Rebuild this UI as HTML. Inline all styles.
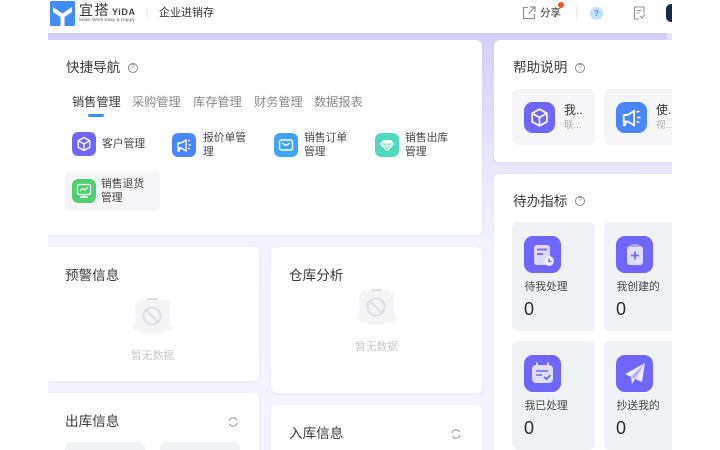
<!DOCTYPE html>
<html lang="zh">
<head>
<meta charset="utf-8">
<style>
*{box-sizing:border-box;margin:0;padding:0}
html,body{width:720px;height:450px;overflow:hidden;background:#fff}
body{font-family:"Liberation Sans","Noto Sans CJK SC",sans-serif;position:relative;color:#333}
#v{position:absolute;left:48px;top:0;width:624px;height:450px;overflow:hidden;background:linear-gradient(180deg,#d2cefc 33px,#e4e1fd 130px,#f3f2fe 240px,#f4f3fe 100%)}
#h{position:absolute;left:0;top:0;width:624px;height:33px;background:#fff}
.a{position:absolute}
.c{position:absolute;background:#fff;border-radius:6px;box-shadow:0 1px 3px rgba(90,80,180,.07)}
.t{position:absolute;font-size:13.6px;line-height:20px;color:#3a3a40;white-space:nowrap}
.q{position:absolute;width:10px;height:10px;border:1px solid #8a8a8a;border-radius:50%;font-size:7px;line-height:8px;text-align:center;color:#777}
.tab{position:absolute;top:94px;font-size:12.2px;line-height:17px;color:#888;white-space:nowrap}
.ic{position:absolute;width:24px;height:24px;border-radius:6px;display:block}
.lb{position:absolute;font-size:10.8px;line-height:14px;color:#444;width:46px}
.tile{position:absolute;background:#f1f2f6;border-radius:6px;width:83px}
.big{position:absolute;width:37px;height:37px;border-radius:9px;background:#6f66ff;display:block}
.tl{position:absolute;font-size:10.8px;line-height:14px;color:#444;white-space:nowrap}
.n{position:absolute;font-size:18px;line-height:20px;color:#2b2b33}
.em{position:absolute;font-size:10.8px;line-height:15px;color:#c9c9cc;white-space:nowrap}
</style>
</head>
<body>
<div id="v">
<div id="h"></div>
<div class="a" style="left:619px;top:33px;width:5px;height:7px;background:#e4e1fd"></div>
<svg class="a" style="left:2px;top:1px" width="25" height="25" viewBox="0 0 25 25"><rect width="25" height="25" rx="1.500" fill="#3f8ef7"/><path d="M3 6l9.500 6.500L22 6v5l-7.500 5v9h-4v-9L3 11z" fill="#fff"/></svg>
<div class="a" style="left:31px;top:2px;font-size:14px;line-height:16px;letter-spacing:1.500px;color:#333;white-space:nowrap">宜搭</div>
<div class="a" style="left:64px;top:7px;font-size:9px;line-height:11px;letter-spacing:.6px;font-weight:bold;color:#444">YiDA</div>
<div class="a" style="left:31px;top:18px;font-size:4.800px;line-height:5px;color:#666;white-space:nowrap">Make Work Easy &amp; Happy</div>
<div class="a" style="left:99px;top:7px;width:1px;height:12px;background:#eee"></div>
<div class="a" style="left:111px;top:5px;font-size:11px;line-height:16px;color:#333;white-space:nowrap">企业进销存</div>
<svg class="a" style="left:474px;top:6px" width="14" height="14" viewBox="0 0 14 14" fill="none" stroke="#8d9199" stroke-width="1.200"><path d="M6 1.500H1.500v11h11V8M8 1h5v5M13 1L6.500 7.500"/></svg>
<div class="a" style="left:492px;top:5px;font-size:10.500px;line-height:16px;color:#333">分享</div>
<div class="a" style="left:510px;top:2px;width:6px;height:6px;border-radius:50%;background:#f2541b"></div>
<div class="a" style="left:528px;top:7px;width:1px;height:12px;background:#e6e6e6"></div>
<div class="a" style="left:542px;top:7px;width:13px;height:13px;border-radius:50%;background:#c3e0fd;color:#3f8ef7;font-size:8px;line-height:13px;text-align:center;font-weight:bold">?</div>
<svg class="a" style="left:585px;top:6px" width="13" height="14" viewBox="0 0 13 14" fill="none" stroke="#8d9199" stroke-width="1.100"><path d="M6 13H1.500V1h9.500v6.500M4 4.500h4.500M4 7h2.500M7 10l2 2 3-3.500"/></svg>
<div class="a" style="left:618px;top:4px;width:6px;height:18px;border-radius:5px 0 0 5px;background:#16294a"></div>

<!-- 快捷导航 -->
<div class="c" style="left:-8px;top:40px;width:442px;height:195px"></div>
<div class="t" style="left:18px;top:58px">快捷导航</div>
<div class="q" style="left:80px;top:63px">?</div>
<div class="tab" style="left:24px;color:#3a3a40">销售管理</div>
<div class="tab" style="left:84px">采购管理</div>
<div class="tab" style="left:145px">库存管理</div>
<div class="tab" style="left:206px">财务管理</div>
<div class="tab" style="left:266px">数据报表</div>
<div class="a" style="left:40px;top:114px;width:16px;height:3px;border-radius:2px;background:#3f8ef7"></div>

<svg class="ic" style="left:24px;top:132px" viewBox="0 0 24 24"><rect width="24" height="24" rx="6" fill="#6f66ff"/><path d="M12 5.500l5.700 3.200v6.600L12 18.500l-5.700-3.200V8.700zM6.500 8.800L12 12l5.500-3.200M12 12v6" fill="none" stroke="#fff" stroke-width="1.400"/></svg>
<div class="lb" style="left:54px;top:137px;width:60px">客户管理</div>
<svg class="ic" style="left:124px;top:133px" viewBox="0 0 24 24"><rect width="24" height="24" rx="6" fill="#4a86fb"/><path d="M6 10h3l5-3v11l-5-3H8l-1 3H6l.500-3H6z" fill="none" stroke="#fff" stroke-width="1.400"/><path d="M16 8l2-1M16.500 12H19M16 15l2 1" stroke="#fff" stroke-width="1.200"/></svg>
<div class="lb" style="left:155px;top:131px">报价单管理</div>
<svg class="ic" style="left:226px;top:133px" viewBox="0 0 24 24"><rect width="24" height="24" rx="6" fill="#3fa5fb"/><rect x="5.500" y="7" width="13" height="10" rx="2" fill="none" stroke="#fff" stroke-width="1.400"/><path d="M8 10l4 2.500 4-2.500" fill="none" stroke="#fff" stroke-width="1.300"/></svg>
<div class="lb" style="left:256px;top:131px">销售订单管理</div>
<svg class="ic" style="left:327px;top:133px" viewBox="0 0 24 24"><rect width="24" height="24" rx="6" fill="#4fd9bd"/><path d="M8 7h8l3.500 4L12 18.500 4.500 11z" fill="#fff"/><path d="M5 11h14M9.500 11L12 17l2.500-6" stroke="#4fd9bd" stroke-width=".8" fill="none"/></svg>
<div class="lb" style="left:357px;top:131px">销售出库管理</div>
<div class="a" style="left:17px;top:171px;width:95px;height:40px;border-radius:6px;background:#f6f6f8"></div>
<svg class="ic" style="left:24px;top:179px" viewBox="0 0 24 24"><rect width="24" height="24" rx="6" fill="#4ed070"/><rect x="5.500" y="5.500" width="13" height="10" rx="1.500" fill="none" stroke="#fff" stroke-width="1.300"/><path d="M8 12l2.500-2.500 2 1.500L16 8.500" fill="none" stroke="#fff" stroke-width="1.100"/><path d="M8 18h8M12 15.500V18" stroke="#fff" stroke-width="1.400"/></svg>
<div class="lb" style="left:53px;top:177px">销售退货管理</div>

<!-- 预警 -->
<div class="c" style="left:-8px;top:247px;width:219px;height:134px"></div>
<div class="t" style="left:17px;top:266px">预警信息</div>
<svg class="a" style="left:80px;top:296px" width="48" height="44" viewBox="0 0 48 44"><path d="M19 2h11v4H19z" fill="#e0e0e4"/><rect x="7" y="4" width="35" height="32" rx="6" fill="#f4f4f7"/><path d="M2 30h5l17 6 18-6h5l-3 3-14 5H18L5 33z" fill="#f5f5f8"/><circle cx="24" cy="20" r="8.500" fill="none" stroke="#dfdfe3" stroke-width="2"/><path d="M18 14l12 12" stroke="#dfdfe3" stroke-width="2"/></svg>
<div class="em" style="left:83px;top:349px">暂无数据</div>

<!-- 仓库 -->
<div class="c" style="left:223px;top:247px;width:211px;height:146px"></div>
<div class="t" style="left:241px;top:266px">仓库分析</div>
<svg class="a" style="left:304px;top:287px" width="48" height="44" viewBox="0 0 48 44"><path d="M19 2h11v4H19z" fill="#e0e0e4"/><rect x="7" y="4" width="35" height="32" rx="6" fill="#f4f4f7"/><path d="M2 30h5l17 6 18-6h5l-3 3-14 5H18L5 33z" fill="#f5f5f8"/><circle cx="24" cy="20" r="8.500" fill="none" stroke="#dfdfe3" stroke-width="2"/><path d="M18 14l12 12" stroke="#dfdfe3" stroke-width="2"/></svg>
<div class="em" style="left:307px;top:340px">暂无数据</div>

<!-- 出库 -->
<div class="c" style="left:-8px;top:393px;width:219px;height:70px"></div>
<div class="t" style="left:17px;top:412px">出库信息</div>
<svg class="a" style="left:180px;top:417px" width="10" height="10" viewBox="0 0 11 11" fill="none" stroke="#8a8a8a" stroke-width="1"><path d="M1 4.500A4.500 4.500 0 0 1 9.500 3.500M10 6.500A4.500 4.500 0 0 1 1.500 7.500"/></svg>
<div class="a" style="left:17px;top:442px;width:80px;height:20px;border-radius:6px;background:#f1f2f6"></div>
<div class="a" style="left:112px;top:442px;width:80px;height:20px;border-radius:6px;background:#f1f2f6"></div>

<!-- 入库 -->
<div class="c" style="left:223px;top:405px;width:211px;height:60px"></div>
<div class="t" style="left:241px;top:424px">入库信息</div>
<svg class="a" style="left:403px;top:429px" width="10" height="10" viewBox="0 0 11 11" fill="none" stroke="#8a8a8a" stroke-width="1"><path d="M1 4.500A4.500 4.500 0 0 1 9.500 3.500M10 6.500A4.500 4.500 0 0 1 1.500 7.500"/></svg>

<!-- 帮助 -->
<div class="c" style="left:446px;top:40px;width:190px;height:122px"></div>
<div class="t" style="left:465px;top:58px">帮助说明</div>
<div class="q" style="left:527px;top:63px">?</div>
<div class="a" style="left:464px;top:89px;width:83px;height:56px;border-radius:6px;background:#f6f6f8"></div>
<div class="a" style="left:556px;top:89px;width:83px;height:56px;border-radius:6px;background:#f6f6f8"></div>
<svg class="big" style="left:476px;top:102px;width:31px;height:31px" viewBox="0 0 24 24"><rect width="24" height="24" rx="6" fill="#6f66ff"/><path d="M12 5.500l5.700 3.200v6.600L12 18.500l-5.700-3.200V8.700zM6.500 8.800L12 12l5.500-3.200M12 12v6" fill="none" stroke="#fff" stroke-width="1.300"/></svg>
<div class="a" style="left:516px;top:102px;font-size:12px;line-height:16px;color:#333">我..</div>
<div class="a" style="left:516px;top:119px;font-size:9.500px;line-height:13px;color:#aaa">联...</div>
<svg class="big" style="left:568px;top:102px;width:31px;height:31px" viewBox="0 0 24 24"><rect width="24" height="24" rx="6" fill="#4a86fb"/><path d="M6 10h3l5-3v11l-5-3H8l-1 3H6l.500-3H6z" fill="none" stroke="#fff" stroke-width="1.400"/><path d="M16 8l2-1M16.500 12H19M16 15l2 1" stroke="#fff" stroke-width="1.200"/></svg>
<div class="a" style="left:608px;top:102px;font-size:12px;line-height:16px;color:#333">使.</div>
<div class="a" style="left:608px;top:119px;font-size:9.500px;line-height:13px;color:#aaa">视...</div>

<!-- 待办 -->
<div class="c" style="left:446px;top:174px;width:190px;height:290px"></div>
<div class="t" style="left:465px;top:192px">待办指标</div>
<div class="q" style="left:527px;top:196px">?</div>

<div class="tile" style="left:464px;top:222px;height:109px"></div>
<div class="tile" style="left:556px;top:222px;height:109px"></div>
<div class="tile" style="left:464px;top:341px;height:109px"></div>
<div class="tile" style="left:556px;top:341px;height:109px"></div>

<svg class="big" style="left:476px;top:236px" viewBox="0 0 37 37"><rect width="37" height="37" rx="9" fill="#6f66ff"/><rect x="10" y="9" width="16" height="20" rx="3" fill="#dcd9ff"/><path d="M13 13.500h10" stroke="#6f66ff" stroke-width="1.800"/><path d="M13 18h6" stroke="#6f66ff" stroke-width="1.800"/><circle cx="25" cy="25" r="5" fill="#eeedff"/><path d="M25 22.500V25.500h2.500" fill="none" stroke="#6f66ff" stroke-width="1.200"/></svg>
<div class="tl" style="left:476.500px;top:280px">待我处理</div>
<div class="n" style="left:476px;top:299px">0</div>
<svg class="big" style="left:568px;top:236px" viewBox="0 0 37 37"><rect width="37" height="37" rx="9" fill="#6f66ff"/><rect x="11" y="10" width="16" height="19" rx="3" fill="#e0deff"/><rect x="15" y="8" width="8" height="3" rx="1" fill="#a9a4ff"/><path d="M19 15.500v8M15 19.500h8" stroke="#6f66ff" stroke-width="1.800"/></svg>
<div class="tl" style="left:568.500px;top:280px">我创建的</div>
<div class="n" style="left:568px;top:299px">0</div>
<svg class="big" style="left:476px;top:355px" viewBox="0 0 37 37"><rect width="37" height="37" rx="9" fill="#6f66ff"/><rect x="8" y="10" width="21" height="18" rx="4" fill="#e0deff"/><path d="M13 7.500v4M24 7.500v4" stroke="#e0deff" stroke-width="2"/><path d="M12 16h12M12 20h6" stroke="#6f66ff" stroke-width="1.600"/><path d="M20 22l2.500 2 4-4" fill="none" stroke="#6f66ff" stroke-width="1.600"/></svg>
<div class="tl" style="left:476.500px;top:399px">我已处理</div>
<div class="n" style="left:476px;top:418px">0</div>
<svg class="big" style="left:568px;top:355px" viewBox="0 0 37 37"><rect width="37" height="37" rx="9" fill="#6f66ff"/><path d="M9 19L29 8l-3 19-7-3-3 5-1-7z" fill="#eceaff"/><path d="M15 22L29 8 19 24" fill="#b6b1ff"/></svg>
<div class="tl" style="left:568.500px;top:399px">抄送我的</div>
<div class="n" style="left:568px;top:418px">0</div>
</div>
</body>
</html>
